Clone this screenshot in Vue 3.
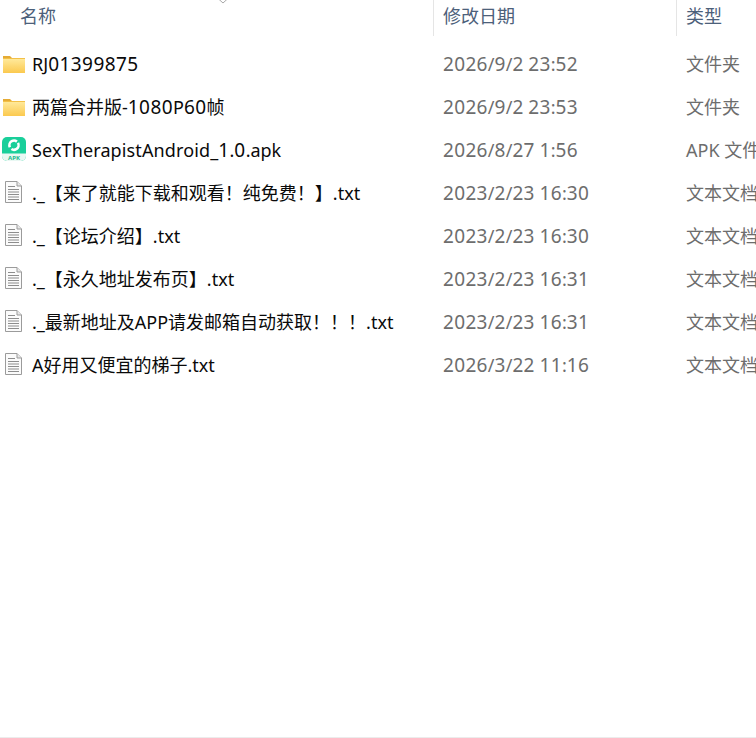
<script setup>
const rows = [
  { name: 'RJ01399875', date: '2026/9/2 23:52', type: '文件夹', icon: 'folder' },
  { name: '两篇合并版-1080P60帧', date: '2026/9/2 23:53', type: '文件夹', icon: 'folder' },
  { name: 'SexTherapistAndroid_1.0.apk', date: '2026/8/27 1:56', type: 'APK 文件', icon: 'apk' },
  { name: '._【来了就能下载和观看！纯免费！】.txt', date: '2023/2/23 16:30', type: '文本文档', icon: 'txt' },
  { name: '._【论坛介绍】.txt', date: '2023/2/23 16:30', type: '文本文档', icon: 'txt' },
  { name: '._【永久地址发布页】.txt', date: '2023/2/23 16:31', type: '文本文档', icon: 'txt' },
  { name: '._最新地址及APP请发邮箱自动获取！！！.txt', date: '2023/2/23 16:31', type: '文本文档', icon: 'txt' },
  { name: 'A好用又便宜的梯子.txt', date: '2026/3/22 11:16', type: '文本文档', icon: 'txt' }
]
const parts = (s) =>
  s.split(/(\d+|[A-Za-z]{5,})/).filter(Boolean).map((t) => ({
    t,
    c: /^\d/.test(t) ? 'num' : /^[A-Za-z]{5,}$/.test(t) ? 'word' : ''
  }))
</script>

<template>
  <div class="page">
    <svg class="sort" width="12" height="4" viewBox="0 0 12 4"><path d="M0.5 -2 L6 3 L11.5 -2" fill="none" stroke="#a8a8a8" stroke-width="1" /></svg>
    <div class="head">
      <div class="hname">名称</div>
      <div class="hdate">修改日期</div>
      <div class="htype">类型</div>
    </div>
    <div class="list">
      <div v-for="r in rows" :key="r.name" class="row">
        <div class="name">
          <svg v-if="r.icon === 'folder'" class="icon" width="24" height="24" viewBox="0 0 24 24">
            <defs>
              <linearGradient :id="'f' + r.name" x1="0" y1="0" x2="0" y2="1">
                <stop offset="0" stop-color="#ffe99a" />
                <stop offset="1" stop-color="#fbc94f" />
              </linearGradient>
            </defs>
            <path d="M3 5 h7 l2 2 h-9 z" fill="#e5ab35" />
            <rect x="3" y="7" width="22" height="15" fill="#f3c047" />
            <rect x="3" y="8" width="22" height="14" :fill="'url(#f' + r.name + ')'" />
          </svg>
          <svg v-else-if="r.icon === 'apk'" class="icon" width="24" height="24" viewBox="0 0 24 24">
            <rect x="2" y="0" width="24" height="24" rx="5" fill="#19cf9a" />
            <path d="M2 16.5 H26 V19 A5 5 0 0 1 21 24 H7 A5 5 0 0 1 2 19 Z" fill="#e9f8f3" />
            <circle cx="14" cy="8.2" r="4.6" fill="none" stroke="#fff" stroke-width="2.6" stroke-dasharray="12 2.45" transform="rotate(-30 14 8.2)" />
            <text x="14" y="22.6" class="apk">APK</text>
          </svg>
          <svg v-else class="icon" width="24" height="24" viewBox="0 0 24 24">
            <path d="M5.5 1.5 H17 L21.5 6 V22.5 H5.5 Z" fill="#fbfbfb" stroke="#9b9b9b" />
            <path d="M17 1.5 V6 H21.5" fill="#e8e8e8" stroke="#9b9b9b" />
            <path d="M8 6.5 H15 M8 9.5 H19 M8 12 H19 M8 14.5 H19 M8 17 H19 M8 19.5 H19" stroke="#8d8d8d" stroke-width="1" />
          </svg>
          <span class="ntext"><span v-for="(p, i) in parts(r.name)" :key="i" :class="p.c">{{ p.t }}</span></span>
        </div>
        <div class="date"><span v-for="(p, i) in parts(r.date)" :key="i" :class="p.c">{{ p.t }}</span></div>
        <div class="type">{{ r.type }}</div>
      </div>
    </div>
    <div class="bottom"></div>
  </div>
</template>

<style>
html, body { margin: 0; background: #fff; overflow: hidden; }
</style>

<style scoped>
.page {
  position: relative;
  width: 756px;
  height: 738px;
  overflow: hidden;
  display: flex;
  flex-direction: column;
  background: #fff;
  font-family: "Noto Sans", "Noto Sans CJK SC", sans-serif;
  font-size: 18px;
}
.sort { position: absolute; left: 217px; top: 0; }
.head {
  display: grid;
  grid-template-columns: 433px 243px 80px;
  height: 36px;
  color: #4c607a;
}
.hname { padding: 3px 0 0 20px; line-height: 26px; }
.hdate, .htype { padding: 3px 0 0 9px; line-height: 26px; border-left: 1px solid #e5e5e5; }
.list { padding-top: 6px; display: flex; flex-direction: column; flex: 1; }
.row {
  display: grid;
  grid-template-columns: 433px 243px 80px;
  height: 43px;
  align-items: center;
  white-space: nowrap;
  line-height: 26px;
}
.name { display: flex; align-items: center; color: #0a0a0a; }
.icon { flex: none; margin-right: 6px; margin-bottom: 2px; overflow: visible; }
.ntext { margin-left: 2px; }
.num { font-size: 19px; letter-spacing: 0.45px; }
.date .num { letter-spacing: 0.33px; }
.word { letter-spacing: 0.12px; }
.date { padding-left: 10px; color: #6d6d6d; }
.type { padding-left: 10px; color: #6d6d6d; overflow: hidden; }
.apk { font-size: 6px; fill: #19b98c; text-anchor: middle; font-weight: 700; }
.bottom { height: 1px; background: #ececec; flex: none; }
</style>
